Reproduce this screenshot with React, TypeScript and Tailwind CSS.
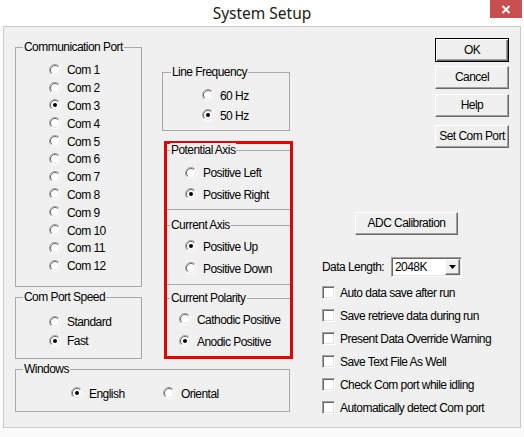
import React from "react";

function Radio({ checked }: { checked?: boolean }) {
  return (
    <svg width="12" height="12" viewBox="0 0 12 12" className="shrink-0">
      <circle cx="6" cy="6" r="5.5" fill="#ffffff" />
      <path d="M 2.1 9.9 A 5.5 5.5 0 0 1 9.9 2.1" stroke="#a0a0a0" fill="none" />
      <path d="M 2.8 9.2 A 4.5 4.5 0 0 1 9.2 2.8" stroke="#696969" fill="none" />
      <path d="M 9.9 2.1 A 5.5 5.5 0 0 1 2.1 9.9" stroke="#ffffff" fill="none" />
      <path d="M 9.2 2.8 A 4.5 4.5 0 0 1 2.8 9.2" stroke="#e3e3e3" fill="none" />
      {checked && <circle cx="6" cy="6" r="2" fill="#000000" />}
    </svg>
  );
}

function RadioItem({
  label,
  checked,
  h,
}: {
  label: string;
  checked?: boolean;
  h: string;
}) {
  return (
    <div className={`flex items-center ${h}`}>
      <Radio checked={checked} />
      <span className="ml-[6px] mt-[2px] leading-[15px] whitespace-nowrap">{label}</span>
    </div>
  );
}

function Legend({ children, className }: { children: React.ReactNode; className: string }) {
  return (
    <span
      className={`absolute -top-[8px] bg-[#f0f0f0] px-[1px] leading-[15px] whitespace-nowrap ${className}`}
    >
      {children}
    </span>
  );
}

function Checkbox() {
  return (
    <div className="w-[13px] h-[13px] shrink-0 bg-white border border-t-[#a0a0a0] border-l-[#a0a0a0] border-r-white border-b-white shadow-[inset_1px_1px_0_#696969,inset_-1px_-1px_0_#e3e3e3]" />
  );
}

function CheckRow({ label }: { label: string }) {
  return (
    <div className="flex items-center h-[23px]">
      <Checkbox />
      <span className="ml-[5px] mt-[2px] leading-[15px] whitespace-nowrap">{label}</span>
    </div>
  );
}

function Button({
  label,
  className,
  isDefault,
}: {
  label: string;
  className: string;
  isDefault?: boolean;
}) {
  return (
    <div
      className={`flex items-center justify-center bg-[#f0f0f0] leading-[15px] whitespace-nowrap ${
        isDefault
          ? "border border-black shadow-[inset_1px_1px_0_#ffffff,inset_-1px_-1px_0_#696969,inset_-2px_-2px_0_#a0a0a0]"
          : "border border-t-white border-l-white border-r-[#696969] border-b-[#696969] shadow-[inset_-1px_-1px_0_#a0a0a0]"
      } ${className}`}
    >
      {label}
    </div>
  );
}

export default function App() {
  const coms = Array.from({ length: 12 }, (_, i) => `Com ${i + 1}`);
  return (
    <div className="w-[524px] h-[437px] bg-[#fbfbfb] flex flex-col overflow-hidden">
      {/* Title bar */}
      <div className="h-[26px] bg-white relative flex items-center justify-center shrink-0">
        <span className="font-['Noto_Sans',sans-serif] text-[15.5px] leading-[20px] text-[#1a1a1a]">
          System Setup
        </span>
        <div className="absolute right-[2px] top-0 w-[32px] h-[18px] bg-[#c7504f] flex items-center justify-center">
          <svg width="10" height="9" viewBox="0 0 10 9">
            <path d="M1.5 1 L8.5 8 M8.5 1 L1.5 8" stroke="#ffffff" strokeWidth="2" />
          </svg>
        </div>
      </div>

      {/* Client area */}
      <div className="mx-[3px] h-[402px] shrink-0 border border-[#cacaca] bg-[#f0f0f0] flex text-[12px] tracking-[-0.55px] text-black font-['Liberation_Sans',Arial,sans-serif]">
        {/* Left + middle block */}
        <div className="flex flex-col pl-[11px]">
          <div className="flex">
            {/* Left column */}
            <div className="flex flex-col w-[127px]">
              <div className="relative mt-[20px] h-[240px] border border-[#a8a8a8] pt-[13px] pl-[33px]">
                <Legend className="left-[7px]">Communication Port</Legend>
                {coms.map((c) => (
                  <RadioItem key={c} label={c} checked={c === "Com 3"} h="h-[17.8px]" />
                ))}
              </div>
              <div className="relative mt-[10px] h-[62px] border border-[#a8a8a8] pt-[14px] pl-[33px]">
                <Legend className="left-[7px]">Com Port Speed</Legend>
                <RadioItem label="Standard" h="h-[19px]" />
                <RadioItem label="Fast" checked h="h-[19px]" />
              </div>
            </div>

            {/* Middle column */}
            <div className="flex flex-col ml-[20px] w-[130px]">
              <div className="relative mt-[45px] w-[128px] h-[59px] border border-[#a8a8a8] pt-[12px] pl-[39px]">
                <Legend className="left-[8px]">Line Frequency</Legend>
                <RadioItem label="60 Hz" h="h-[20px]" />
                <RadioItem label="50 Hz" checked h="h-[20px]" />
              </div>

              <div className="ml-[2px] mt-[10px] w-[129px] h-[218px] border-[3px] border-[#e20000] flex flex-col">
                <div className="relative mt-[6px] h-[60px] border-y border-[#a8a8a8] pt-[11px] pl-[18px]">
                  <Legend className="left-[3px]">Potential Axis</Legend>
                  <RadioItem label="Positive Left" h="h-[21.5px]" />
                  <RadioItem label="Positive Right" checked h="h-[21.5px]" />
                </div>
                <div className="relative mt-[15px] h-[60px] border-y border-[#a8a8a8] pt-[9px] pl-[18px]">
                  <Legend className="left-[3px]">Current Axis</Legend>
                  <RadioItem label="Positive Up" checked h="h-[22px]" />
                  <RadioItem label="Positive Down" h="h-[22px]" />
                </div>
                <div className="relative mt-[13px] flex-1 border-t border-[#a8a8a8] pt-[9px] pl-[12px]">
                  <Legend className="left-[3px]">Current Polarity</Legend>
                  <RadioItem label="Cathodic Positive" h="h-[22px]" />
                  <RadioItem label="Anodic Positive" checked h="h-[22px]" />
                </div>
              </div>
            </div>
          </div>

          {/* Windows */}
          <div className="relative mt-[10px] w-[275px] h-[43px] border border-[#a8a8a8] pt-[13px] pl-[55px] flex">
            <Legend className="left-[7px]">Windows</Legend>
            <div className="w-[92px]">
              <RadioItem label="English" checked h="h-[20px]" />
            </div>
            <RadioItem label="Oriental" h="h-[20px]" />
          </div>
        </div>

        {/* Right column */}
        <div className="flex flex-col ml-[30px] w-[188px]">
          <Button label="OK" isDefault className="mt-[11px] ml-[113px] w-[74px] h-[24px]" />
          <Button label="Cancel" className="mt-[4px] ml-[113px] w-[74px] h-[23px]" />
          <Button label="Help" className="mt-[5px] ml-[113px] w-[74px] h-[23px]" />
          <Button label="Set Com Port" className="mt-[8px] ml-[113px] w-[74px] h-[23px]" />
          <Button label="ADC Calibration" className="mt-[64px] ml-[33px] w-[103px] h-[23px]" />

          <div className="mt-[22px] h-[20px] flex items-center">
            <span className="w-[69px] mt-[1px] leading-[15px] whitespace-nowrap">Data Length:</span>
            <div className="w-[71px] h-[20px] bg-white border border-t-[#a0a0a0] border-l-[#a0a0a0] border-r-white border-b-white shadow-[inset_1px_1px_0_#696969,inset_-1px_-1px_0_#e3e3e3] flex items-center">
              <span className="flex-1 pl-[3px] leading-[15px]">2048K</span>
              <div className="w-[15px] h-[16px] mr-[1px] bg-[#f0f0f0] border border-t-white border-l-white border-r-[#696969] border-b-[#696969] shadow-[inset_-1px_-1px_0_#a0a0a0] flex items-center justify-center">
                <svg width="7" height="4" viewBox="0 0 7 4">
                  <path d="M0 0 H7 L3.5 4 Z" fill="#000000" />
                </svg>
              </div>
            </div>
          </div>

          <div className="mt-[4px] flex flex-col">
            <CheckRow label="Auto data save after run" />
            <CheckRow label="Save retrieve data during run" />
            <CheckRow label="Present Data Override Warning" />
            <CheckRow label="Save Text File As Well" />
            <CheckRow label="Check Com port while idling" />
            <CheckRow label="Automatically detect Com port" />
          </div>
        </div>
      </div>
    </div>
  );
}
